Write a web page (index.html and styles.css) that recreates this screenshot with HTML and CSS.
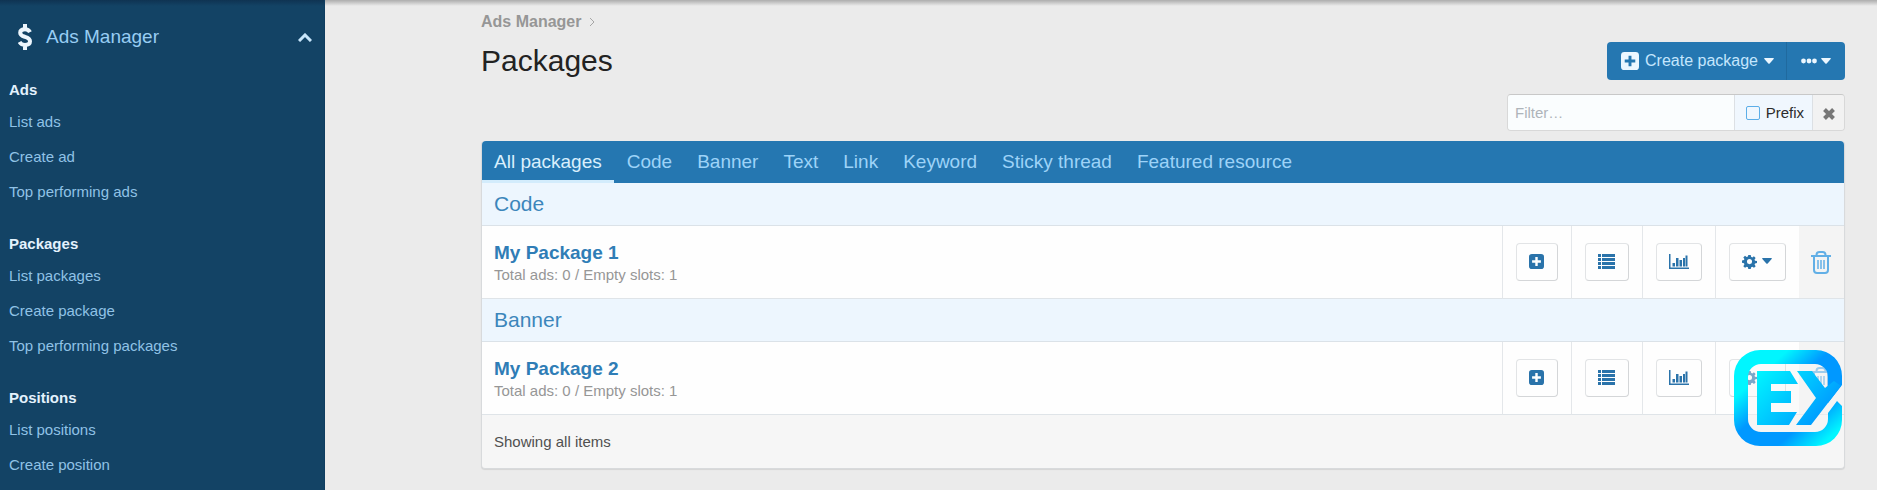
FILE: index.html
```html
<!DOCTYPE html>
<html lang="en">
<head>
  <meta charset="UTF-8">
  <meta name="viewport" content="width=device-width, initial-scale=1">
  <title>Packages</title>
  <link rel="stylesheet" href="styles.css">
</head>
<body>
  <!-- icon set -->
  <svg class="sprite" aria-hidden="true">
    <symbol id="i-plus" viewBox="0 0 16 16">
      <path fill-rule="evenodd" d="M3 0h10a3 3 0 0 1 3 3v10a3 3 0 0 1-3 3H3a3 3 0 0 1-3-3V3a3 3 0 0 1 3-3zM6.700 3.300v3.400H3.300v2.600h3.400v3.400h2.600V9.300h3.400V6.700H9.300V3.300z"/>
    </symbol>
    <symbol id="i-caret" viewBox="0 0 10 6">
      <path d="M.8 0h8.400q1.200 0 .4 1L5.700 5.500q-.7.700-1.400 0L.4 1Q-.4 0 .8 0z"/>
    </symbol>
    <symbol id="i-list" viewBox="0 0 17 15">
      <path d="M0 0h3v3H0zM4 0h13v3H4zM0 4h3v3H0zM4 4h13v3H4zM0 8h3v3H0zM4 8h13v3H4zM0 12h3v3H0zM4 12h13v3H4z"/>
    </symbol>
    <symbol id="i-chart" viewBox="0 0 20 15">
      <path d="M0 0h1.500v13.500H20V15H0zM3.500 9H6v3.500H3.500zM7 4h2.500v8.500H7zM10.500 6H13v6.500h-2.500zM14 4h2v8.500h-2zM16.500 1.500h2v11h-2z"/>
    </symbol>
    <symbol id="i-gear" viewBox="0 0 16 16">
      <path fill-rule="evenodd" d="M6.700 1h2.600l.4 2 1.300.6 1.700-1.200 1.800 1.800L13.300 6l.6 1.200 2.100.3v2.200l-2.100.4-.5 1.200 1.200 1.800-1.800 1.700-1.800-1.100-1.200.5-.5 1.800H6.700l-.4-1.900-1.300-.5-1.800 1.200-1.800-1.800L2.600 11l-.5-1.200L0 9.400V6.900l2.100-.4.500-1.200-1.200-1.700L3.200 1.900l1.700 1.200 1.400-.5zM8 5.400a2.700 2.700 0 1 0 0 5.400 2.700 2.700 0 0 0 0-5.400z"/>
    </symbol>
    <symbol id="i-trash" viewBox="0 0 20 23">
      <path fill="none" stroke="currentColor" stroke-width="2" d="M0 5h20M5.500 5V4q0-3 3-3h3q3 0 3 3v1M3 5v14q0 3 3 3h8q3 0 3-3V5"/>
      <path fill="none" stroke="currentColor" stroke-width="1.500" d="M7 9v9M10 9v9M13 9v9"/>
    </symbol>
  </svg>

  <div class="page">
    <nav class="sidebar">
      <button class="sidebar-title" type="button">
        <svg class="dollar" viewBox="0 0 14 26"><path d="M12 8.200Q10.500 5.200 7 5.200 2.200 5.200 2.200 8.700c0 2.800 2.400 3.400 4.800 4.100s5 1.500 5 4.500q0 3.600-5 3.600-4 0-5.500-3M7 0v5M7 21v5"/></svg>
        <span>Ads Manager</span>
        <svg class="chevron" viewBox="0 0 14 9"><path d="M1 8l6-6 6 6"/></svg>
      </button>
      <div class="group">
        <h3>Ads</h3>
        <a href="#">List ads</a>
        <a href="#">Create ad</a>
        <a href="#">Top performing ads</a>
      </div>
      <div class="group">
        <h3>Packages</h3>
        <a href="#">List packages</a>
        <a href="#">Create package</a>
        <a href="#">Top performing packages</a>
      </div>
      <div class="group">
        <h3>Positions</h3>
        <a href="#">List positions</a>
        <a href="#">Create position</a>
      </div>
    </nav>

    <main class="main">
      <div class="breadcrumb">
        <a href="#">Ads Manager</a>
        <svg viewBox="0 0 6 10"><path d="M1 1l4 4-4 4"/></svg>
      </div>

      <header class="header">
        <h1>Packages</h1>
        <div class="header-buttons">
          <button type="button" class="btn-create">
            <svg class="icon-plus"><use href="#i-plus"/></svg>
            <span>Create package</span>
            <svg class="icon-caret"><use href="#i-caret"/></svg>
          </button>
          <button type="button" class="btn-more" aria-label="More options">
            <svg class="icon-dots" viewBox="0 0 16 6"><circle cx="2.500" cy="3" r="2.400"/><circle cx="8" cy="3" r="2.400"/><circle cx="13.500" cy="3" r="2.400"/></svg>
            <svg class="icon-caret"><use href="#i-caret"/></svg>
          </button>
        </div>
      </header>

      <form class="filter">
        <input type="text" class="filter-text" placeholder="Filter…" aria-label="Filter">
        <label class="prefix"><input type="checkbox"> Prefix</label>
        <button type="button" class="clear" aria-label="Clear filter">
          <svg viewBox="0 0 12 12"><path d="M1.500 1.500l9 9M10.500 1.500l-9 9"/></svg>
        </button>
      </form>

      <section class="panel">
        <nav class="tabs">
          <a href="#" class="active">All packages</a>
          <a href="#">Code</a>
          <a href="#">Banner</a>
          <a href="#">Text</a>
          <a href="#">Link</a>
          <a href="#">Keyword</a>
          <a href="#">Sticky thread</a>
          <a href="#">Featured resource</a>
        </nav>
        <table class="packages">
          <colgroup>
            <col>
            <col class="col-add">
            <col class="col-list">
            <col class="col-stats">
            <col class="col-gear">
            <col class="col-delete">
          </colgroup>
          <tbody>
            <tr class="section"><th colspan="6">Code</th></tr>
            <tr class="package">
              <td class="info"><a href="#">My Package 1</a><span>Total ads: 0 / Empty slots: 1</span></td>
              <td><button type="button" aria-label="Add"><svg class="icon-add"><use href="#i-plus"/></svg></button></td>
              <td><button type="button" aria-label="List"><svg class="icon-list"><use href="#i-list"/></svg></button></td>
              <td><button type="button" aria-label="Statistics"><svg class="icon-chart"><use href="#i-chart"/></svg></button></td>
              <td><button type="button" aria-label="Options"><svg class="icon-gear"><use href="#i-gear"/></svg><svg class="icon-caret"><use href="#i-caret"/></svg></button></td>
              <td class="delete"><a href="#" aria-label="Delete"><svg><use href="#i-trash"/></svg></a></td>
            </tr>
            <tr class="section"><th colspan="6">Banner</th></tr>
            <tr class="package">
              <td class="info"><a href="#">My Package 2</a><span>Total ads: 0 / Empty slots: 1</span></td>
              <td><button type="button" aria-label="Add"><svg class="icon-add"><use href="#i-plus"/></svg></button></td>
              <td><button type="button" aria-label="List"><svg class="icon-list"><use href="#i-list"/></svg></button></td>
              <td><button type="button" aria-label="Statistics"><svg class="icon-chart"><use href="#i-chart"/></svg></button></td>
              <td><button type="button" aria-label="Options"><svg class="icon-gear"><use href="#i-gear"/></svg><svg class="icon-caret"><use href="#i-caret"/></svg></button></td>
              <td class="delete"><a href="#" aria-label="Delete"><svg><use href="#i-trash"/></svg></a></td>
            </tr>
          </tbody>
        </table>
        <div class="panel-footer">Showing all items</div>

        <!-- logo badge over the corner of the panel -->
        <svg class="badge" viewBox="0 0 108 96" aria-hidden="true">
          <defs>
            <linearGradient id="ring" x1="0" y1="0" x2="1" y2="1">
              <stop offset="0" stop-color="#00f6ff"/>
              <stop offset=".25" stop-color="#00f6ff"/>
              <stop offset=".45" stop-color="#0098ff"/>
              <stop offset=".7" stop-color="#0098ff"/>
              <stop offset=".9" stop-color="#00f6ff"/>
            </linearGradient>
            <linearGradient id="mark" gradientUnits="userSpaceOnUse" x1="24" y1="20" x2="85" y2="75">
              <stop offset="0" stop-color="#00f6ff"/>
              <stop offset="1" stop-color="#0098ff"/>
            </linearGradient>
          </defs>
          <rect x="13" y="13" width="82" height="70" rx="13" fill="#f6f6f6" fill-opacity=".4"/>
          <path fill="url(#ring)" fill-rule="evenodd" d="M26 0h56a26 26 0 0 1 26 26v9L94 53V27A13 13 0 0 0 81 14H27a13 13 0 0 0-13 13v42a13 13 0 0 0 13 13h54a13 13 0 0 0 13-13v-6l9-12 5 5v14a26 26 0 0 1-26 26H26A26 26 0 0 1 0 70V26A26 26 0 0 1 26 0z"/>
          <path fill="url(#mark)" d="M23 21h33l8 13H37v7h20v12H37v9h26l-8 13H23zM63 21h15l13 17 9-7 7 5-30 39H62l20-27z"/>
        </svg>
      </section>
    </main>
  </div>
</body>
</html>
```
FILE: styles.css
```css
* {
  box-sizing: border-box;
}
body {
  margin: 0;
  font-family: "Liberation Sans", Arial, sans-serif;
  font-size: 15px;
  line-height: 20px;
  background: #ebebeb;
  color: #505050;
}
a {
  text-decoration: none;
  color: inherit;
}
button, input {
  font: inherit;
}
button {
  cursor: pointer;
}
svg {
  display: block;
  flex: none;
  fill: currentColor;
}
.sprite {
  display: none;
}
.page {
  display: flex;
  min-height: 100vh;
  background: linear-gradient(#00000044, #00000000 6px);
}

/* sidebar */
.sidebar {
  width: 325px;
  flex: none;
  background: linear-gradient(#0f3352, #134365 6px);
  border-right: 1px solid #0f3d60;
  color: #90c2e6;
}
.sidebar-title {
  display: flex;
  align-items: center;
  width: 100%;
  height: 76px;
  padding: 0 12px 2px 18px;
  gap: 14px;
  border: 0;
  background: none;
  color: #98cdf3;
  font-size: 19px;
  text-align: left;
}
.sidebar-title span {
  flex: 1;
}
.dollar {
  width: 14px;
  height: 26px;
  fill: none;
  stroke: #edf6fd;
  stroke-width: 4;
}
.chevron {
  width: 14px;
  height: 9px;
  fill: none;
  stroke: #c8e6fb;
  stroke-width: 3;
}
.group {
  padding-left: 9px;
  margin-bottom: 21px;
}
.group:last-child {
  margin-bottom: 0;
}
.group h3 {
  margin: 0;
  font-size: 15px;
  line-height: 28px;
  color: #e3f2fd;
}
.group a {
  display: block;
  padding: 8px 0;
  line-height: 19px;
}

/* page header */
.main {
  flex: 1;
  min-width: 0;
  padding: 12px 32px 18px 156px;
}
.breadcrumb {
  display: flex;
  align-items: center;
  gap: 8px;
  font-size: 16px;
  font-weight: bold;
  color: #969696;
}
.breadcrumb svg {
  width: 6px;
  height: 10px;
  fill: none;
  stroke: #a6a6a6;
  stroke-width: 1;
}
.header {
  display: flex;
  align-items: center;
  justify-content: space-between;
  margin-top: 10px;
}
h1 {
  margin: 0;
  font-size: 30px;
  font-weight: normal;
  line-height: 38px;
  color: #222;
}
.header-buttons {
  display: flex;
  color: #c4e6fd;
  font-size: 16px;
}
.header-buttons button {
  display: flex;
  align-items: center;
  height: 38px;
  border: 0;
  background: #2577b1;
  color: inherit;
}
.header-buttons svg {
  color: #ecf7ff;
}
.btn-create {
  gap: 6px;
  padding: 0 12px 0 14px;
  border-radius: 4px 0 0 4px;
}
.header-buttons .btn-more {
  gap: 4px;
  padding: 0 14px;
  border-left: 1px solid #206a9f;
  border-radius: 0 4px 4px 0;
}
.icon-plus {
  width: 18px;
  height: 18px;
}
.icon-caret {
  width: 10px;
  height: 6px;
}
.icon-dots {
  width: 16px;
  height: 6px;
}

/* filter bar */
.filter {
  display: flex;
  width: 338px;
  height: 37px;
  margin: 14px 0 10px auto;
  border: 1px solid #d8d8d8;
  border-top-color: #c8c8c8;
  border-radius: 4px;
  overflow: hidden;
}
.filter-text {
  flex: 1;
  min-width: 0;
  padding: 0 7px;
  border: 0;
  background: #fafdfe;
}
.filter-text::placeholder {
  color: #aeb4ba;
  opacity: 1;
}
.prefix {
  display: flex;
  align-items: center;
  gap: 6px;
  padding: 0 8px 0 11px;
  background: #f0f7fe;
  border-left: 1px solid #dce0e4;
  border-right: 1px solid #dce0e4;
  color: #2c2c2c;
}
.prefix input {
  appearance: none;
  width: 14px;
  height: 14px;
  margin: 0;
  border: 1px solid #5caee8;
  border-radius: 2px;
}
.clear {
  display: flex;
  align-items: center;
  justify-content: center;
  width: 31px;
  padding: 2px 0 0;
  border: 0;
  background: #f2f2f2;
}
.clear svg {
  width: 12px;
  height: 12px;
  stroke: #777;
  stroke-width: 4;
}

/* package list */
.panel {
  position: relative;
  border: 1px solid #d8dadc;
  border-top: 0;
  border-radius: 4px;
  background: #f6f6f6;
  box-shadow: 0 1px 1px #00000018;
}
.tabs {
  display: flex;
  gap: 1px;
  background: #2577b1;
  border-radius: 4px 4px 0 0;
  color: #9dd3f8;
  font-size: 19px;
}
.tabs a {
  padding: 11px 12px 8px;
  border-bottom: 3px solid transparent;
}
.tabs .active {
  color: #d9effd;
  border-bottom-color: #d3ecfc;
}
.packages {
  width: 100%;
  table-layout: fixed;
  border-collapse: separate;
  border-spacing: 0;
}
.col-add {
  width: 69px;
}
.col-list {
  width: 71px;
}
.col-stats {
  width: 73px;
}
.col-gear {
  width: 84px;
}
.col-delete {
  width: 45px;
}
.section th {
  height: 43px;
  padding: 0 12px;
  background: #edf6fe;
  border-bottom: 1px solid #dbe2e8;
  color: #3c86bb;
  font-size: 21px;
  font-weight: normal;
  text-align: left;
}
.package td {
  height: 73px;
  padding: 0 13px;
  background: #fefefe;
  border-left: 1px solid #e4e7ea;
  border-bottom: 1px solid #dfe4e8;
}
.package .info {
  padding: 2px 12px 0;
  border-left: 0;
  color: #969696;
}
.info a {
  display: block;
  font-size: 19px;
  line-height: 24px;
  font-weight: bold;
  color: #2f7db6;
}
.info span {
  display: block;
}
.package button {
  display: flex;
  align-items: center;
  justify-content: center;
  gap: 5px;
  width: 100%;
  height: 38px;
  padding: 0 0 2px;
  border: 1px solid #e2e4e6;
  border-right-color: #d4d6d8;
  border-bottom-color: #d4d6d8;
  border-radius: 4px;
  background: #fefefe;
  color: #2a73aa;
}
.icon-add {
  width: 15px;
  height: 15px;
}
.icon-list {
  width: 17px;
  height: 15px;
}
.icon-chart {
  width: 20px;
  height: 15px;
}
.icon-gear {
  width: 15px;
  height: 15px;
}
.package .delete {
  padding: 0;
  background: #f4f4f4;
  border-left: 0;
  color: #62afe6;
}
.delete svg {
  width: 20px;
  height: 23px;
  margin: 0 auto;
}
.panel-footer {
  padding: 17px 12px 16px;
}
.badge {
  position: absolute;
  right: 2px;
  bottom: 22px;
  width: 108px;
  height: 96px;
}
```
